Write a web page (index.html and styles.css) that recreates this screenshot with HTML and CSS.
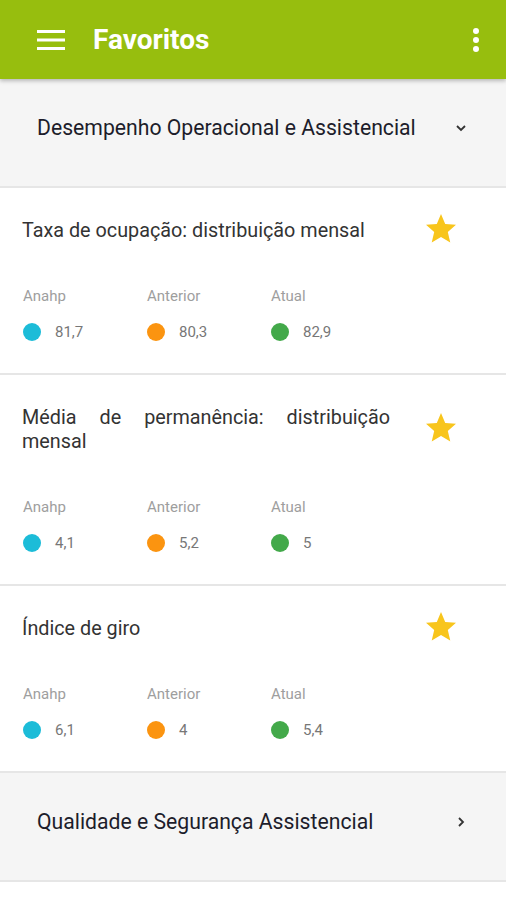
FILE: index.html
```html
<!DOCTYPE html>
<html lang="pt">
<head>
    <meta charset="UTF-8">
    <meta name="viewport" content="width=device-width, initial-scale=1.0">
    <title>Favoritos</title>
    <link rel="stylesheet" href="styles.css">
</head>
<body>

    <!-- Barra superior -->
    <header class="app-bar">
        <svg class="menu-icon" width="28" height="20" viewBox="0 0 28 20">
            <rect x="0" y="0" width="28" height="3" fill="#fff"/>
            <rect x="0" y="8.5" width="28" height="3" fill="#fff"/>
            <rect x="0" y="17" width="28" height="3" fill="#fff"/>
        </svg>
        <h1 class="app-title">Favoritos</h1>
        <svg class="more-icon" width="8" height="26" viewBox="0 0 8 26">
            <circle cx="4" cy="4" r="3" fill="#fff"/>
            <circle cx="4" cy="13" r="3" fill="#fff"/>
            <circle cx="4" cy="22" r="3" fill="#fff"/>
        </svg>
    </header>

    <!-- Grupo aberto -->
    <div class="group">
        <span class="group-title">Desempenho Operacional e Assistencial</span>
        <svg class="chevron" width="14" height="14" viewBox="0 0 14 14">
            <path d="M3 5 L7 9 L11 5" fill="none" stroke="#333" stroke-width="1.8"/>
        </svg>
    </div>

    <div class="card">
        <div class="card-head">
            <p class="card-title">Taxa de ocupação: distribuição mensal</p>
            <svg class="star" width="36" height="36" viewBox="0 0 24 24">
                <path d="M12 17.27L18.18 21l-1.64-7.03L22 9.24l-7.19-.61L12 2 9.19 8.63 2 9.24l5.46 4.73L5.82 21z" fill="#f8c51c"/>
            </svg>
        </div>
        <div class="stats">
            <div class="stat">
                <span class="stat-label">Anahp</span>
                <span class="stat-value"><i class="dot dot-anahp"></i>81,7</span>
            </div>
            <div class="stat">
                <span class="stat-label">Anterior</span>
                <span class="stat-value"><i class="dot dot-prev"></i>80,3</span>
            </div>
            <div class="stat">
                <span class="stat-label">Atual</span>
                <span class="stat-value"><i class="dot dot-now"></i>82,9</span>
            </div>
        </div>
    </div>

    <div class="card">
        <div class="card-head">
            <p class="card-title">Média de permanência: distribuição mensal</p>
            <svg class="star" width="36" height="36" viewBox="0 0 24 24">
                <path d="M12 17.27L18.18 21l-1.64-7.03L22 9.24l-7.19-.61L12 2 9.19 8.63 2 9.24l5.46 4.73L5.82 21z" fill="#f8c51c"/>
            </svg>
        </div>
        <div class="stats">
            <div class="stat">
                <span class="stat-label">Anahp</span>
                <span class="stat-value"><i class="dot dot-anahp"></i>4,1</span>
            </div>
            <div class="stat">
                <span class="stat-label">Anterior</span>
                <span class="stat-value"><i class="dot dot-prev"></i>5,2</span>
            </div>
            <div class="stat">
                <span class="stat-label">Atual</span>
                <span class="stat-value"><i class="dot dot-now"></i>5</span>
            </div>
        </div>
    </div>

    <div class="card">
        <div class="card-head">
            <p class="card-title">Índice de giro</p>
            <svg class="star" width="36" height="36" viewBox="0 0 24 24">
                <path d="M12 17.27L18.18 21l-1.64-7.03L22 9.24l-7.19-.61L12 2 9.19 8.63 2 9.24l5.46 4.73L5.82 21z" fill="#f8c51c"/>
            </svg>
        </div>
        <div class="stats">
            <div class="stat">
                <span class="stat-label">Anahp</span>
                <span class="stat-value"><i class="dot dot-anahp"></i>6,1</span>
            </div>
            <div class="stat">
                <span class="stat-label">Anterior</span>
                <span class="stat-value"><i class="dot dot-prev"></i>4</span>
            </div>
            <div class="stat">
                <span class="stat-label">Atual</span>
                <span class="stat-value"><i class="dot dot-now"></i>5,4</span>
            </div>
        </div>
    </div>

    <!-- Grupo fechado -->
    <div class="group">
        <span class="group-title">Qualidade e Segurança Assistencial</span>
        <svg class="chevron" width="14" height="14" viewBox="0 0 14 14">
            <path d="M5 3 L9 7 L5 11" fill="none" stroke="#333" stroke-width="1.8"/>
        </svg>
    </div>

</body>
</html>
```

FILE: styles.css
```css
* {
    margin: 0;
    padding: 0;
    box-sizing: border-box;
}

body {
    font-family: Roboto, 'Noto Sans', sans-serif;
    background-color: #fff;
    color: #333;
}

/* Barra superior */
.app-bar {
    height: 79px;
    background-color: #97be0e;
    display: flex;
    align-items: center;
    padding: 0 28px 0 37px;
    box-shadow: 0 2px 4px rgba(0, 0, 0, 0.25);
    position: relative;
}

.menu-icon {
    margin-right: 28px;
}

.app-title {
    flex: 1;
    color: #fff;
    font-size: 28px;
    font-weight: 700;
}

.more-icon {
    margin-right: -2px;
}

/* Grupos */
.group {
    height: 109px;
    background-color: #f5f5f5;
    border-bottom: 2px solid #e6e6e6;
    display: flex;
    align-items: center;
    padding: 0 38px 10px 37px;
}

.group-title {
    flex: 1;
    font-size: 21.2px;
    color: #1d1d2b;
}

/* Cartões */
.card {
    background-color: #fff;
    border-bottom: 2px solid #e6e6e6;
    padding: 31px 47px 31px 22px;
}

.card-head {
    display: flex;
    align-items: center;
}

.card-title {
    flex: 1;
    font-size: 19.8px;
    line-height: 24px;
    color: #333;
    text-align: justify;
    padding-right: 33px;
}

/* a estrela não aumenta a altura da linha do título */
.star {
    margin: -8px 0 -4px;
}

.stats {
    display: flex;
    margin-top: 43px;
}

.stat {
    width: 124px;
    display: flex;
    flex-direction: column;
    padding-left: 1px;
}

.stat-label {
    font-size: 15px;
    line-height: 20px;
    color: #9e9e9e;
}

.stat-value {
    display: flex;
    align-items: center;
    margin-top: 16px;
    font-size: 15px;
    line-height: 20px;
    color: #777;
}

.dot {
    width: 18px;
    height: 18px;
    border-radius: 50%;
    margin-right: 14px;
}

.dot-anahp {
    background-color: #1cbcd8;
}

.dot-prev {
    background-color: #fb9410;
}

.dot-now {
    background-color: #43a94a;
}
```
